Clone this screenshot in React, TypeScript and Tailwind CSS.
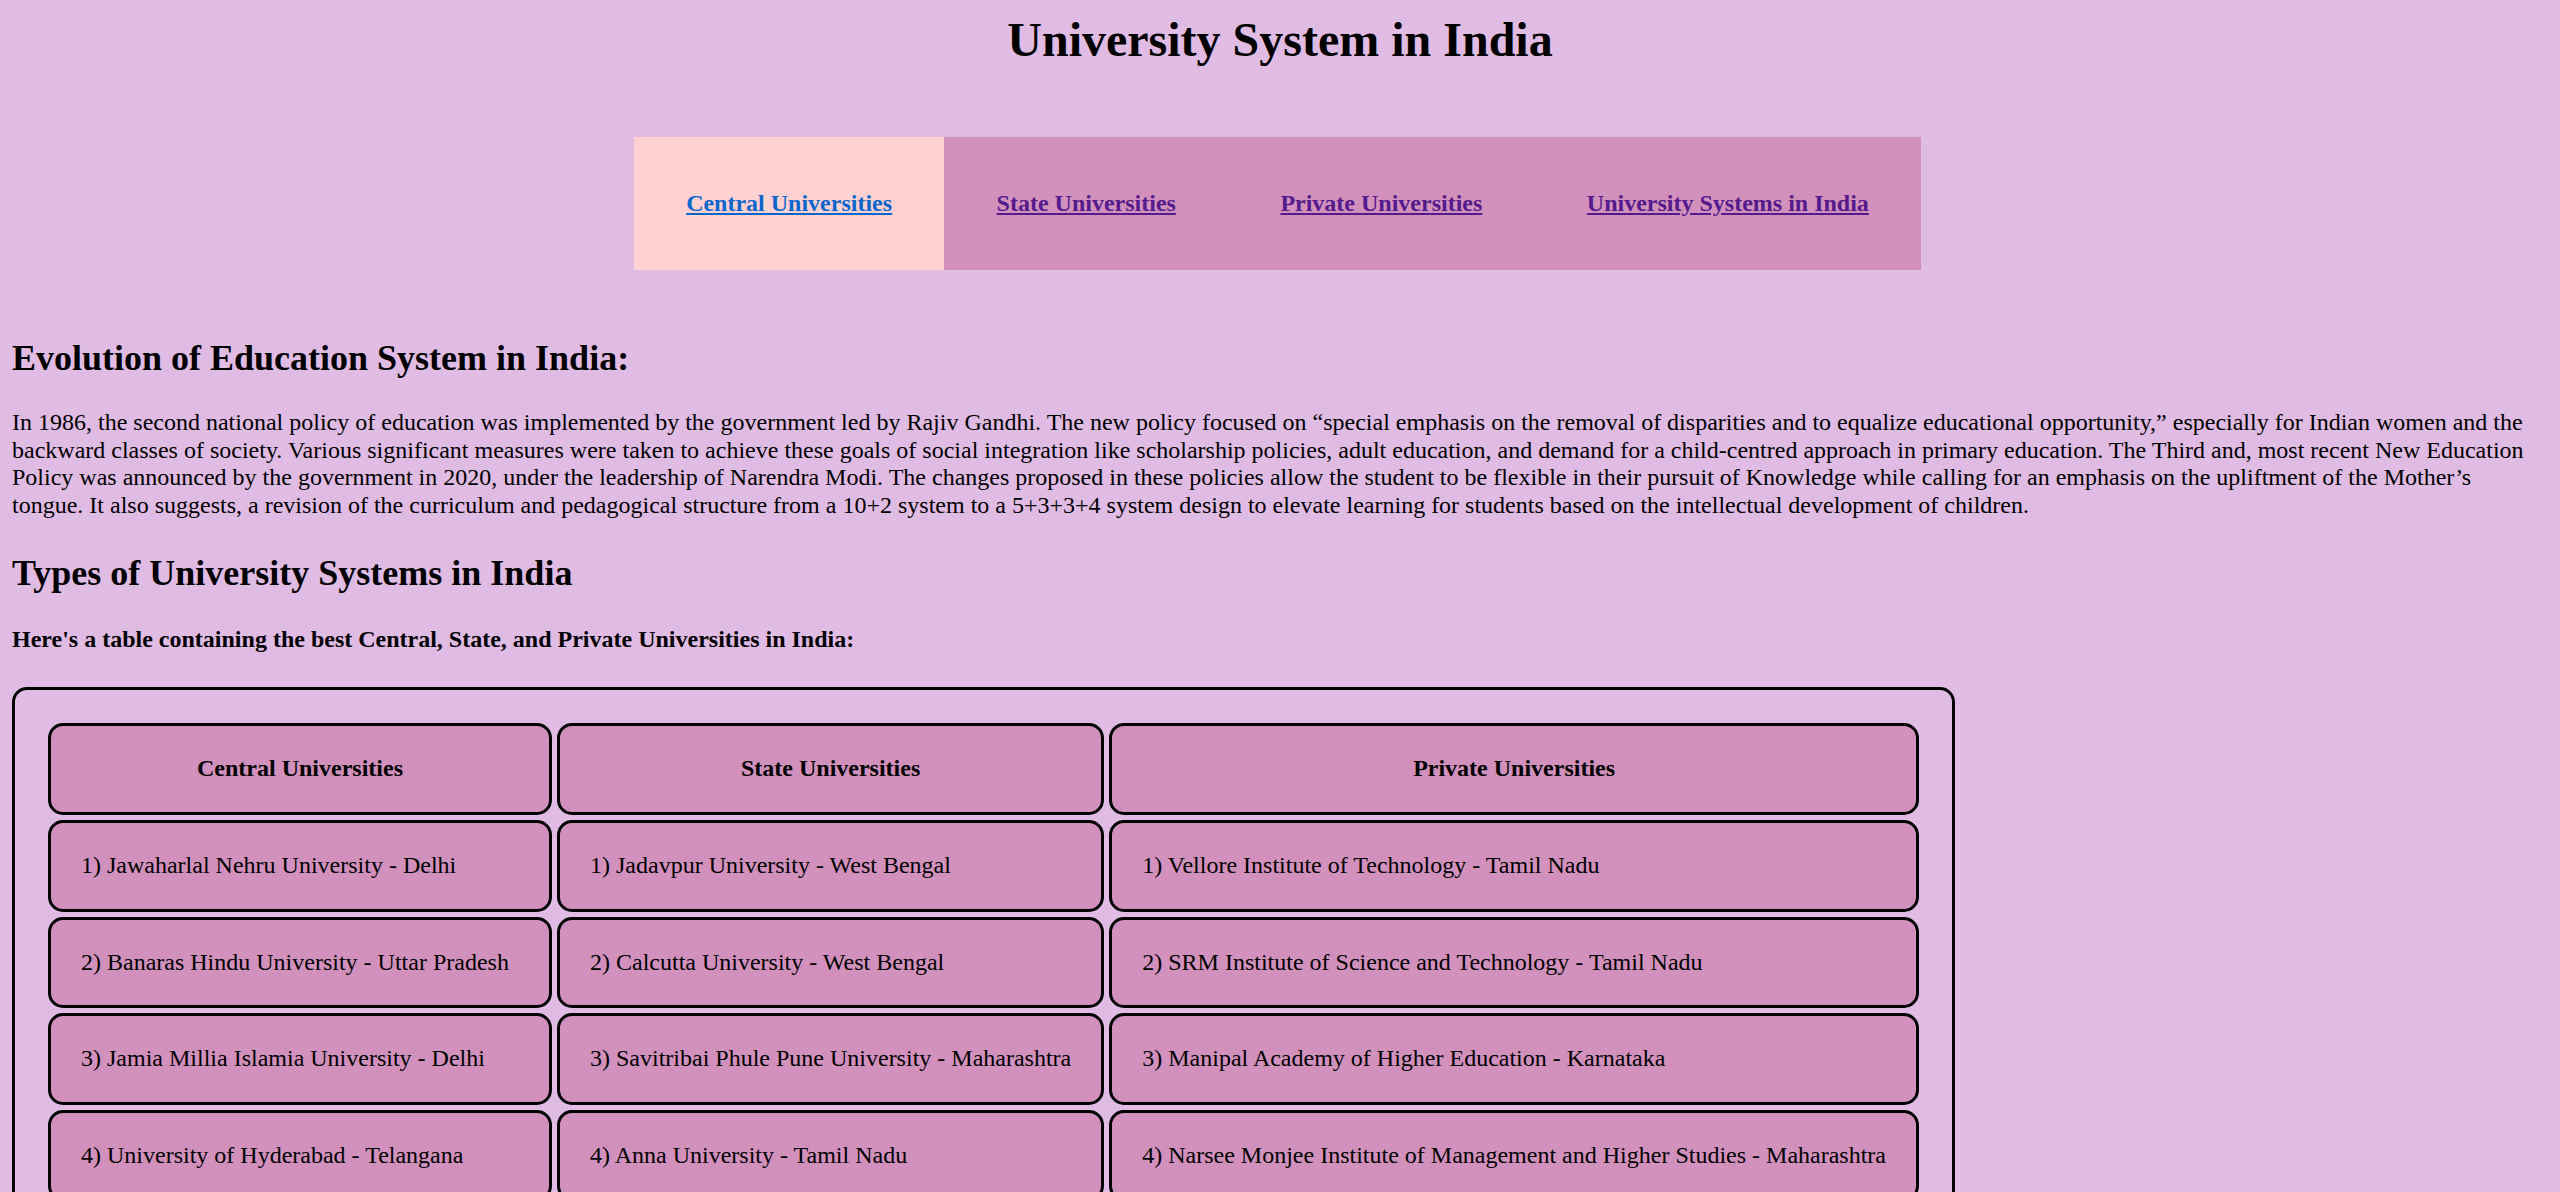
const links = [
  { label: "Central Universities", active: true },
  { label: "State Universities" },
  { label: "Private Universities" },
  { label: "University Systems in India" },
];

const rows = [
  [
    "1) Jawaharlal Nehru University - Delhi",
    "1) Jadavpur University - West Bengal",
    "1) Vellore Institute of Technology - Tamil Nadu",
  ],
  [
    "2) Banaras Hindu University - Uttar Pradesh",
    "2) Calcutta University - West Bengal",
    "2) SRM Institute of Science and Technology - Tamil Nadu",
  ],
  [
    "3) Jamia Millia Islamia University - Delhi",
    "3) Savitribai Phule Pune University - Maharashtra",
    "3) Manipal Academy of Higher Education - Karnataka",
  ],
  [
    "4) University of Hyderabad - Telangana",
    "4) Anna University - Tamil Nadu",
    "4) Narsee Monjee Institute of Management and Higher Studies - Maharashtra",
  ],
];

const App = () => {
  return (
    <div className="min-h-screen bg-[#e0bbe4] p-[12px] font-['Liberation_Serif','Times_New_Roman',serif] text-[24px] leading-[27.6px] text-black">
      {/* Title */}
      <h1 className="text-center text-[48px] font-bold leading-[55px]">
        University System in India
      </h1>

      {/* Nav */}
      <nav className="mt-[70px] flex justify-center pr-[5px]">
        <ul className="flex bg-[#d291bc]">
          {links.map((l) => (
            <li key={l.label}>
              <a
                href="#"
                className={
                  l.active
                    ? "block bg-[#ffd1d1] px-[52.25px] py-[52.5px] font-bold text-[#0a66cc] underline"
                    : "block px-[52.25px] py-[52.5px] font-bold text-[#551a8b] underline"
                }
              >
                {l.label}
              </a>
            </li>
          ))}
        </ul>
      </nav>

      {/* Evolution */}
      <h2 className="mt-[68px] mb-[30px] text-[36px] font-bold leading-[41.4px]">
        Evolution of Education System in India:
      </h2>
      <p>
        In 1986, the second national policy of education was implemented by the
        government led by Rajiv Gandhi. The new policy focused on “special
        emphasis on the removal of disparities and to equalize educational
        opportunity,” especially for Indian women and the backward classes of
        society. Various significant measures were taken to achieve these goals
        of social integration like scholarship policies, adult education, and
        demand for a child-centred approach in primary education. The Third and,
        most recent New Education Policy was announced by the government in
        2020, under the leadership of Narendra Modi. The changes proposed in
        these policies allow the student to be flexible in their pursuit of
        Knowledge while calling for an emphasis on the upliftment of the
        Mother’s tongue. It also suggests, a revision of the curriculum and
        pedagogical structure from a 10+2 system to a 5+3+3+4 system design to
        elevate learning for students based on the intellectual development of
        children.
      </p>

      {/* Types */}
      <h2 className="mt-[34px] text-[36px] font-bold leading-[41.4px]">
        Types of University Systems in India
      </h2>
      <h4 className="mt-[31px] font-bold">
        Here's a table containing the best Central, State, and Private
        Universities in India:
      </h4>

      <div className="mt-[34px] inline-block rounded-[15px] border-[3px] border-black p-[28px]">
        <table className="border-separate border-spacing-[5px]">
          <thead>
            <tr>
              <th className="w-[504px] rounded-[15px] border-[3px] border-black bg-[#d291bc] px-[30px] py-[29px] text-center font-bold">
                Central Universities
              </th>
              <th className="w-[545px] rounded-[15px] border-[3px] border-black bg-[#d291bc] px-[30px] py-[29px] text-center font-bold">
                State Universities
              </th>
              <th className="w-[808px] rounded-[15px] border-[3px] border-black bg-[#d291bc] px-[30px] py-[29px] text-center font-bold">
                Private Universities
              </th>
            </tr>
          </thead>
          <tbody>
            {rows.map((r, i) => (
              <tr key={i}>
                {r.map((c) => (
                  <td
                    key={c}
                    className="whitespace-nowrap rounded-[15px] border-[3px] border-black bg-[#d291bc] px-[30px] py-[29px] text-left"
                  >
                    {c}
                  </td>
                ))}
              </tr>
            ))}
          </tbody>
        </table>
      </div>
    </div>
  );
};

export default App;
